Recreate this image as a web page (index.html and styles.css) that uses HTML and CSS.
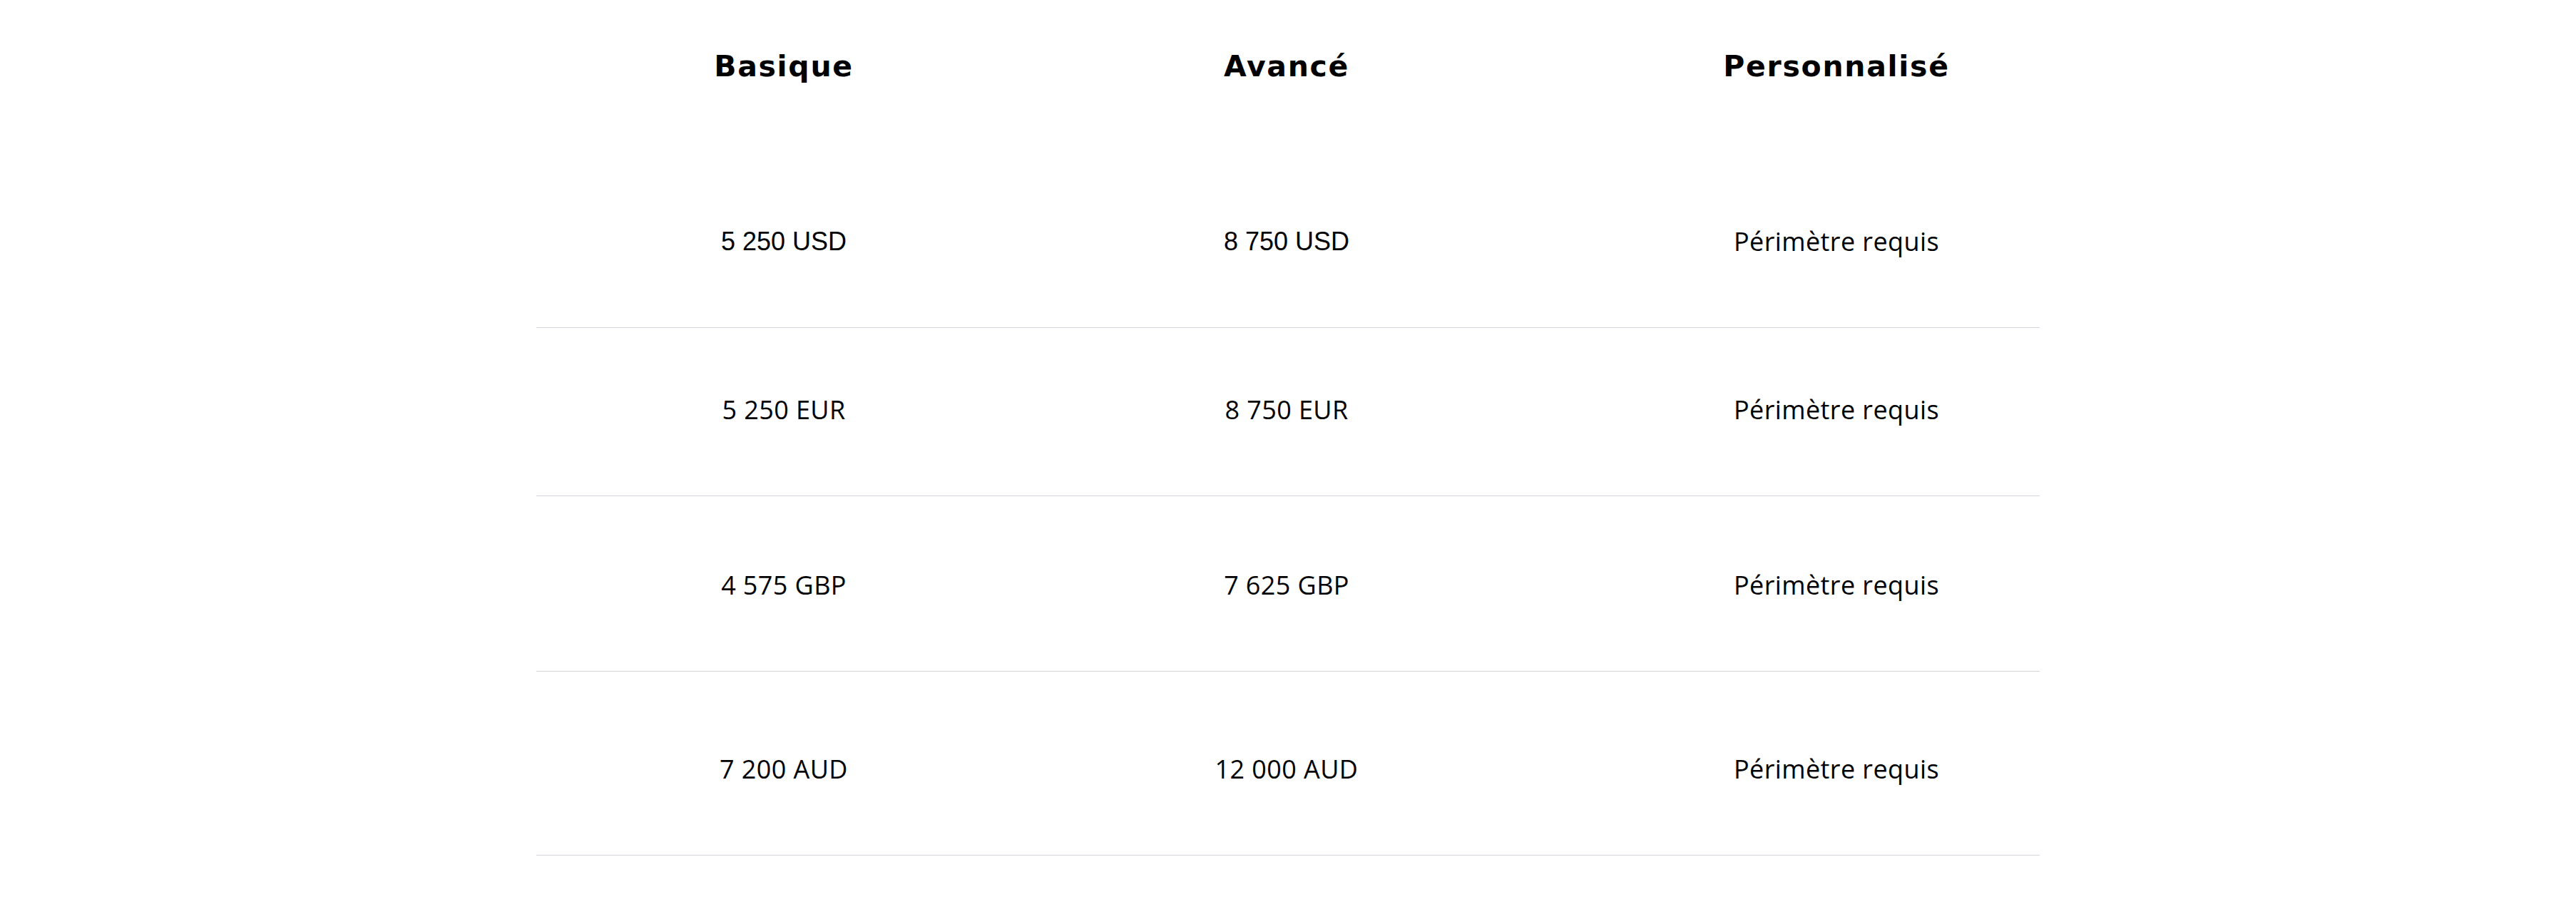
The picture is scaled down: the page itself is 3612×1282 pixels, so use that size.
FILE: index.html
```html
<!DOCTYPE html>
<html lang="fr">
<head>
<meta charset="utf-8">
<title>Tarifs</title>
<link rel="stylesheet" href="styles.css">
</head>
<body>
<div class="pricing">
  <div class="row head">
    <div class="cell">Basique</div>
    <div class="cell">Avancé</div>
    <div class="cell c3">Personnalisé</div>
  </div>
  <div class="row r1">
    <div class="cell alt">5 250 USD</div>
    <div class="cell alt">8 750 USD</div>
    <div class="cell c3">Périmètre requis</div>
  </div>
  <div class="row r2">
    <div class="cell">5 250 EUR</div>
    <div class="cell">8 750 EUR</div>
    <div class="cell c3">Périmètre requis</div>
  </div>
  <div class="row r3">
    <div class="cell">4 575 GBP</div>
    <div class="cell">7 625 GBP</div>
    <div class="cell c3">Périmètre requis</div>
  </div>
  <div class="row r4">
    <div class="cell">7 200 AUD</div>
    <div class="cell">12 000 AUD</div>
    <div class="cell c3">Périmètre requis</div>
  </div>
</div>
</body>
</html>
```

FILE: styles.css
```css
html, body {
  margin: 0;
  padding: 0;
  background: #ffffff;
}

body {
  color: #000000;
  font-family: "Open Sans", "Noto Sans", sans-serif;
}

.pricing {
  width: 2108px;
  margin-left: 752px;
}

.row {
  display: grid;
  grid-template-columns: 694px 716px 698px;
  font-size: 36px;
  font-weight: 400;
  line-height: 54px;
  letter-spacing: 0.4px;
  padding-bottom: 93px;
  border-bottom: 1px solid #d3d4db;
}

.cell {
  text-align: center;
  white-space: nowrap;
}

.cell.c3 {
  padding-left: 128px;
}

.cell.alt {
  font-family: "Liberation Sans", Arial, sans-serif;
  font-size: 36px;
  font-weight: 400;
  letter-spacing: 0;
}

.head {
  font-family: "DejaVu Sans", sans-serif;
  font-size: 41px;
  font-weight: 700;
  line-height: 56px;
  letter-spacing: 1.7px;
  padding-top: 65px;
  padding-bottom: 0;
  border-bottom: none;
}

.r1 { padding-top: 191px; }
.r2 { padding-top: 88px; }
.r3 { padding-top: 98px; }
.r4 { padding-top: 110px; }
```
